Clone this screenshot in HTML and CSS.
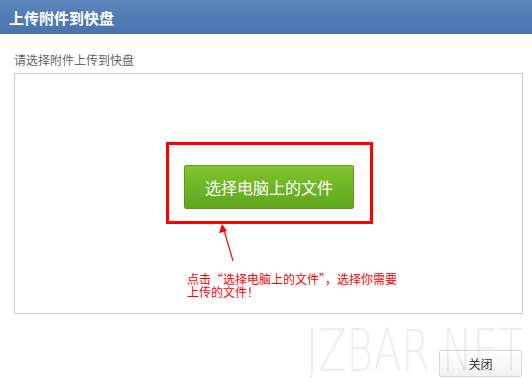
FILE: index.html
```html
<!DOCTYPE html>
<html lang="zh">
<head>
<meta charset="utf-8">
<title>上传附件到快盘</title>
<link rel="stylesheet" href="styles.css">
</head>
<body>
<div class="dialog">
  <div class="header">上传附件到快盘</div>
  <div class="content">
    <div class="subtitle">请选择附件上传到快盘</div>
    <div class="box">
      <div class="frame">
        <button class="pick">选择电脑上的文件</button>
      </div>
      <svg class="arrow" width="24" height="38" viewBox="0 0 24 38">
        <line x1="7" y1="6" x2="16" y2="37" stroke="#f00" stroke-width="1.2"/>
        <polygon points="5,0 2,9 10,7" fill="#f00"/>
      </svg>
      <div class="note">点击“选择电脑上的文件”，选择你需要<br>上传的文件！</div>
    </div>
  </div>
  <div class="footer">
    <button class="close">关闭</button>
  </div>
  <div class="watermark">JZBAR.NET</div>
</div>
</body>
</html>
```

FILE: styles.css
```css
html, body {
  margin: 0;
  padding: 0;
  background: #fff;
}
body {
  font-family: "Noto Sans CJK SC", "Liberation Sans", sans-serif;
  width: 532px;
  height: 378px;
  overflow: hidden;
}
.dialog {
  position: relative;
  height: 378px;
  overflow: hidden;
}
.header {
  height: 34px;
  box-sizing: border-box;
  padding-left: 9px;
  display: flex;
  align-items: center;
  background: linear-gradient(#5b87bb, #4a73ae);
  color: #fff;
  font-size: 15px;
  font-weight: bold;
}
.content {
  padding: 18px 9px 0 14px;
}
.subtitle {
  font-size: 12px;
  line-height: 16px;
  color: #666;
}
.box {
  margin-top: 5px;
  height: 241px;
  box-sizing: border-box;
  border: 1px solid #ccc;
  padding: 68px 0 0 151px;
  display: flex;
  flex-direction: column;
  align-items: flex-start;
}
.frame {
  border: 3px solid #f00;
  padding: 20px 16px 12px 15px;
}
.pick {
  display: block;
  width: 170px;
  height: 44px;
  border: 1px solid #5c9a1f;
  border-radius: 2px;
  background: linear-gradient(#7fc52b, #5fa61f);
  color: #fff;
  font-family: "Noto Sans CJK SC", sans-serif;
  font-size: 16px;
  padding: 0;
  cursor: pointer;
}
.arrow {
  display: block;
  margin-left: 51px;
}
.note {
  margin: 10px 0 0 21px;
  font-size: 12px;
  line-height: 13px;
  color: #f00;
  white-space: nowrap;
}
.footer {
  display: flex;
  justify-content: flex-end;
  padding: 36px 10px 0 0;
}
.close {
  width: 83px;
  height: 27px;
  border: 1px solid #d8d8d8;
  border-radius: 2px;
  background: linear-gradient(#ffffff, #f1f1f1);
  color: #333;
  font-family: "Noto Sans CJK SC", sans-serif;
  font-size: 12px;
  padding: 0;
}
.watermark {
  position: absolute;
  left: 306px;
  top: 321px;
  width: 304px;
  font-family: "DejaVu Sans", sans-serif;
  font-weight: 200;
  font-size: 58px;
  line-height: 60px;
  color: rgba(0, 0, 0, 0.07);
  transform: scaleX(0.71);
  transform-origin: left top;
  pointer-events: none;
  white-space: nowrap;
}
```
